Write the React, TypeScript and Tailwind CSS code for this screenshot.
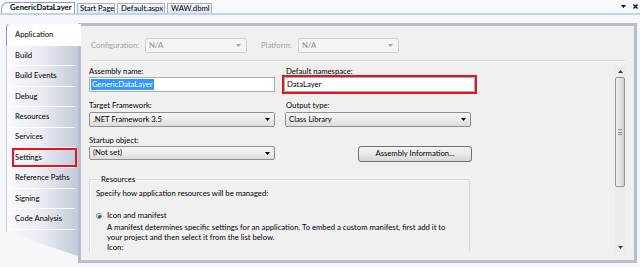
import React from "react";

const Down = ({ color = "#000" }: { color?: string }) => (
  <svg width="5" height="3" viewBox="0 0 5 3" className="block">
    <polygon points="0,0 5,0 2.5,3" fill={color} />
  </svg>
);
const Up = ({ color = "#333" }: { color?: string }) => (
  <svg width="5" height="3" viewBox="0 0 5 3" className="block">
    <polygon points="0,3 5,3 2.5,0" fill={color} />
  </svg>
);

function DisabledCombo({ className }: { className: string }) {
  return (
    <div
      className={`${className} h-[15px] border border-[#cfcfcf] bg-[#f4f4f4] rounded-[2px] flex items-center justify-between pl-[3px] pr-[5px] text-[#8d8d8d]`}
    >
      <span>N/A</span>
      <Down color="#a8a8a8" />
    </div>
  );
}

function Combo({ className, text }: { className: string; text: string }) {
  return (
    <div
      className={`${className} border border-[#8e8e8e] rounded-[2px] bg-linear-to-b from-[#f6f6f6] via-[#ececec] to-[#dcdcdc] flex items-center justify-between pl-[3px] pr-[4px]`}
    >
      <span>{text}</span>
      <Down />
    </div>
  );
}

const navItems = [
  "Build",
  "Build Events",
  "Debug",
  "Resources",
  "Services",
  "Settings",
  "Reference Paths",
  "Signing",
  "Code Analysis",
];

export default function App() {
  return (
    <div className="w-[640px] h-[267px] overflow-hidden bg-[#f5f7fb] [font-family:Lato,sans-serif] text-[7.7px] leading-none text-black whitespace-nowrap">
      {/* document tab strip */}
      <div className="h-[15px] flex items-end border-b-2 border-[#bdd5e6] bg-[#f7f9fc] pl-[1px] gap-[2px]">
        <div className="h-[11px] w-[74px] bg-white border border-b-0 border-[#8f9cb2] rounded-tl-[7px] rounded-tr-[1px] font-bold flex items-center pl-[8px]">
          GenericDataLayer
        </div>
        <div className="h-[10px] w-[38px] bg-linear-to-b from-[#f4f6f9] to-[#e3e7ee] border border-b-0 border-[#a6b0c2] rounded-t-[1px] flex items-center pl-[2px]">
          Start Page
        </div>
        <div className="h-[10px] w-[48px] bg-linear-to-b from-[#f4f6f9] to-[#e3e7ee] border border-b-0 border-[#a6b0c2] rounded-t-[1px] flex items-center pl-[3px]">
          Default.aspx
        </div>
        <div className="h-[10px] w-[45px] bg-linear-to-b from-[#f4f6f9] to-[#e3e7ee] border border-b-0 border-[#a6b0c2] rounded-t-[1px] flex items-center pl-[3px]">
          WAW.dbml
        </div>
        <div className="flex-1" />
        <div className="self-center flex items-center gap-[7px] pr-[2px]">
          <Down />
          <svg width="5" height="5" viewBox="0 0 5 5" className="block">
            <path d="M0.5 0.5L4.5 4.5M4.5 0.5L0.5 4.5" stroke="#000" strokeWidth="1.2" />
          </svg>
        </div>
      </div>

      {/* body */}
      <div className="flex pt-[8px]">
        {/* left navigation */}
        <div className="w-[78px] pl-[6px] pt-[1px]">
          <nav className="relative z-10 w-[72px] h-[232px] rounded-tl-[4px] bg-linear-to-r from-[#fafbfd] via-[#e8ebf1] to-[#c3cada] shadow-[inset_1px_0_0_#ccd2de] [clip-path:polygon(0_0,calc(100%_+_3px)_0,calc(100%_+_3px)_22px,100%_22px,100%_100%,0_208px)]">
            <div className="h-[22px] w-[calc(100%+3px)] bg-white border-l border-[#6c9ad2] rounded-tl-[4px] flex items-center pl-[8px]">
              Application
            </div>
            {navItems.map((item) => (
              <div key={item} className="h-[20.4px] flex flex-col">
                {item === "Settings" ? (
                  <div className="flex-1 ml-[6px] mr-[1px] outline-2 -outline-offset-2 outline-[#e2141d] flex items-center pl-[3px]">
                    {item}
                  </div>
                ) : (
                  <div className="flex-1 flex items-center pl-[9px]">{item}</div>
                )}
                <div className="h-px bg-white/90 ml-[4px] mr-[3px]" />
              </div>
            ))}
          </nav>
        </div>

        {/* property page panel */}
        <div className="w-[559px] h-[240px] border-[3px] border-[#b5bdcf] bg-[#f0f0f0] flex flex-col">
          <div className="mt-[12px] ml-[10px] h-[15px] flex items-center text-[#a3a3a3]">
            <span className="w-[54px]">Configuration:</span>
            <DisabledCombo className="w-[102px]" />
            <span className="ml-[14px] w-[37px]">Platform:</span>
            <DisabledCombo className="w-[101px]" />
          </div>

          <div className="mt-[7px] ml-[8px] mr-[9px] h-[2px] bg-[#d6d6d6] border-b border-white" />

          <div className="mt-[4px] ml-[8px] mr-[9px] h-[186px] flex">
            <div className="flex-1 overflow-hidden">
              {/* row 1 */}
              <div className="flex items-start">
                <div className="w-[186px]">
                  <div className="h-[11px] flex items-center">Assembly name:</div>
                  <div className="h-[15px] border border-[#abadb3] bg-white flex items-center pl-[1px]">
                    <span className="bg-[#3399ff] text-white leading-[11px] px-[1px]">GenericDataLayer</span>
                  </div>
                </div>
                <div className="ml-[9px]">
                  <div className="h-[11px] flex items-center pl-[2px]">Default namespace:</div>
                  <div className="w-[191px] h-[15px] border border-[#abadb3] bg-white flex items-center pl-[2px] outline-2 outline-[#e2141d]">
                    DataLayer
                  </div>
                </div>
              </div>

              {/* row 2 */}
              <div className="mt-[8px] flex items-start">
                <div className="w-[186px]">
                  <div className="h-[11px] flex items-center">Target Framework:</div>
                  <Combo className="mt-[1px] w-[186px] h-[15px]" text=".NET Framework 3.5" />
                </div>
                <div className="ml-[9px]">
                  <div className="h-[11px] flex items-center pl-[2px]">Output type:</div>
                  <Combo className="mt-[1px] ml-[1px] w-[186px] h-[15px]" text="Class Library" />
                </div>
              </div>

              {/* row 3 */}
              <div className="mt-[8px] flex items-start">
                <div className="w-[186px]">
                  <div className="h-[11px] flex items-center">Startup object:</div>
                  <Combo className="w-[186px] h-[14px]" text="(Not set)" />
                </div>
                <div className="ml-[9px] pt-[11px]">
                  <button className="ml-[74px] w-[114px] h-[16px] border border-[#707070] rounded-[3px] bg-linear-to-b from-[#f3f3f3] via-[#e9e9e9] to-[#d6d6d6] flex items-center justify-center">
                    Assembly Information...
                  </button>
                </div>
              </div>

              {/* resources group */}
              <fieldset className="mt-[12px] w-[381px] h-[120px] border border-[#d7d9dc] rounded-[3px] pl-[6px] shadow-[inset_1px_1px_0_#ffffff]">
                <legend className="ml-[4px] px-[1px] leading-[10px]">Resources</legend>
                <div className="mt-[4px] leading-[10px]">Specify how application resources will be managed:</div>
                <div className="mt-[13px] h-[10px] flex items-center gap-[5px]">
                  <div className="w-[6px] h-[6px] rounded-full border border-[#8a8f98] bg-[#e6eef8] flex items-center justify-center">
                    <div className="w-[3px] h-[3px] rounded-full bg-[#1f4f8f]" />
                  </div>
                  <span>Icon and manifest</span>
                </div>
                <div className="ml-[11px] mt-[0.5px] leading-[10.4px]">
                  <div>A manifest determines specific settings for an application. To embed a custom manifest, first add it to</div>
                  <div>your project and then select it from the list below.</div>
                  <div>Icon:</div>
                </div>
              </fieldset>
            </div>

            {/* scrollbar */}
            <div className="w-[10px] h-full flex flex-col bg-[#ebebeb]">
              <div className="h-[11px] flex items-center justify-center">
                <Up color="#3c3c3c" />
              </div>
              <div className="h-[110px] rounded-[2px] border border-[#979797] bg-linear-to-r from-[#f2f2f2] via-[#e2e2e2] to-[#cfcfcf] flex items-center justify-center">
                <div className="w-[4px] h-[6px] flex flex-col justify-between">
                  <div className="h-px bg-[#8c8c8c]" />
                  <div className="h-px bg-[#8c8c8c]" />
                  <div className="h-px bg-[#8c8c8c]" />
                </div>
              </div>
              <div className="flex-1" />
              <div className="h-[10px] flex items-center justify-center">
                <Down color="#3c3c3c" />
              </div>
            </div>
          </div>
        </div>
      </div>
    </div>
  );
}
